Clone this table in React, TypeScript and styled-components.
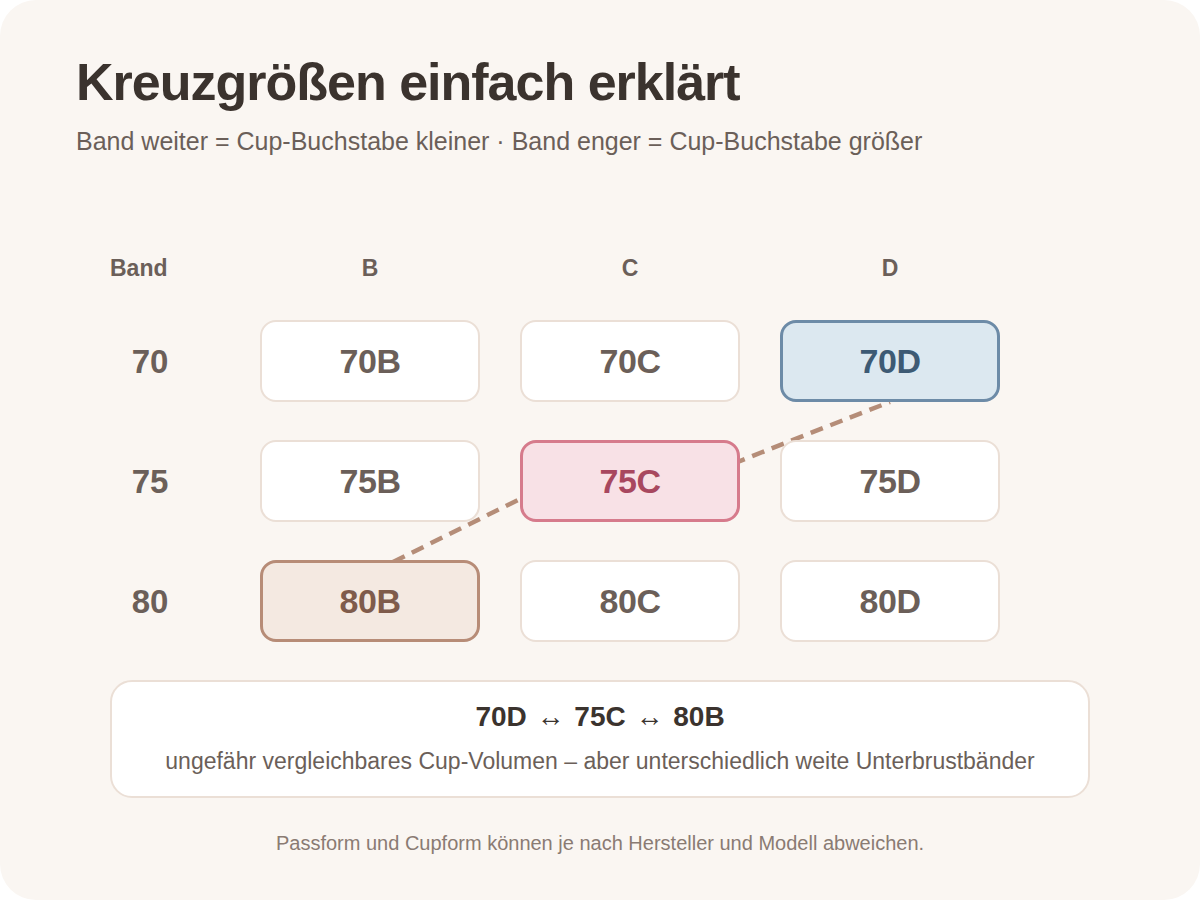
import React from "react";
import styled, { createGlobalStyle, css } from "styled-components";

const GlobalStyle = createGlobalStyle`
  html, body { margin: 0; padding: 0; background: #ffffff; }
  body { font-family: "Liberation Sans", Arial, Helvetica, sans-serif; }
  * { box-sizing: border-box; }
`;

const Card = styled.div`
  width: 1200px;
  height: 900px;
  background: #faf6f2;
  border-radius: 36px;
  padding: 56px 0 0 0;
  display: flex;
  flex-direction: column;
  overflow: hidden;
`;

const Header = styled.header`
  padding-left: 76px;
  display: flex;
  flex-direction: column;
  gap: 21px;
`;

const Title = styled.h1`
  margin: 0;
  font-size: 52px;
  line-height: 1;
  font-weight: 700;
  letter-spacing: -1px;
  color: #3b332e;
`;

const Subtitle = styled.p`
  margin: 0;
  font-size: 25px;
  line-height: 1;
  color: #6b5f59;
`;

const Grid = styled.div`
  position: relative;
  margin: 103px 0 0 110px;
  width: 890px;
  display: grid;
  grid-template-columns: 110px repeat(3, 220px);
  grid-template-rows: 25px repeat(3, 82px);
  column-gap: 40px;
  row-gap: 38px;
`;

const HeadLabel = styled.div<{ $left?: boolean }>`
  font-size: 23px;
  line-height: 1;
  font-weight: 700;
  color: #6b5f59;
  text-align: ${(p) => (p.$left ? "left" : "center")};
`;

const RowLabel = styled.div`
  align-self: center;
  padding-right: 30px;
  text-align: center;
  font-size: 33px;
  line-height: 1;
  font-weight: 700;
  color: #6b5f59;
`;

type Tone = "plain" | "blue" | "pink" | "tan";

const tones: Record<Tone, ReturnType<typeof css>> = {
  plain: css`
    background: #ffffff;
    border: 2px solid #ebdfd6;
    color: #6b5f59;
  `,
  blue: css`
    background: #dce8f0;
    border: 3px solid #6d8ba7;
    color: #3d5a74;
  `,
  pink: css`
    background: #f8e1e6;
    border: 3px solid #d67b8c;
    color: #a8475f;
  `,
  tan: css`
    background: #f4e9e1;
    border: 3px solid #b78c77;
    color: #7f5b4b;
  `,
};

const Cell = styled.div<{ $tone: Tone }>`
  position: relative;
  z-index: 1;
  display: flex;
  align-items: center;
  justify-content: center;
  border-radius: 16px;
  font-size: 34px;
  font-weight: 700;
  letter-spacing: -0.5px;
  ${(p) => tones[p.$tone]}
`;

const Connector = styled.svg`
  position: absolute;
  left: 0;
  top: 0;
  z-index: 0;
  pointer-events: none;
`;

const Summary = styled.section`
  margin: 38px 0 0 110px;
  width: 980px;
  height: 118px;
  background: #ffffff;
  border: 2px solid #ebdfd6;
  border-radius: 22px;
  padding-top: 21px;
  display: flex;
  flex-direction: column;
  align-items: center;
  gap: 19px;
`;

const SummaryTitle = styled.div`
  font-size: 28px;
  line-height: 1;
  font-weight: 700;
  color: #3b332e;
`;

const Arrow = styled.span`
  font-weight: 400;
  margin: 0 2px;
`;

const SummaryText = styled.div`
  font-size: 23px;
  line-height: 1;
  color: #6b5f59;
`;

const Footnote = styled.p`
  margin: 35px 0 0 0;
  text-align: center;
  font-size: 20px;
  line-height: 1;
  color: #8a7b73;
`;

const bands = ["70", "75", "80"];
const cups = ["B", "C", "D"];

const toneFor = (band: string, cup: string): Tone => {
  const k = band + cup;
  if (k === "70D") return "blue";
  if (k === "75C") return "pink";
  if (k === "80B") return "tan";
  return "plain";
};

export default function App() {
  return (
    <>
      <GlobalStyle />
      <Card>
        <Header>
          <Title>Kreuzgrößen einfach erklärt</Title>
          <Subtitle>
            Band weiter = Cup-Buchstabe kleiner · Band enger = Cup-Buchstabe größer
          </Subtitle>
        </Header>

        <Grid>
          <Connector width="890" height="385" viewBox="0 0 890 385">
            <path
              d="M 283 305 L 410 242 L 630 204 Q 710 172 780 145"
              fill="none"
              stroke="#b58d78"
              strokeWidth="4.5"
              strokeDasharray="13 8"
            />
          </Connector>
          <HeadLabel $left>Band</HeadLabel>
          {cups.map((c) => (
            <HeadLabel key={c}>{c}</HeadLabel>
          ))}
          {bands.map((b) => (
            <React.Fragment key={b}>
              <RowLabel>{b}</RowLabel>
              {cups.map((c) => (
                <Cell key={c} $tone={toneFor(b, c)}>
                  {b}
                  {c}
                </Cell>
              ))}
            </React.Fragment>
          ))}
        </Grid>

        <Summary>
          <SummaryTitle>
            70D <Arrow>↔</Arrow> 75C <Arrow>↔</Arrow> 80B
          </SummaryTitle>
          <SummaryText>
            ungefähr vergleichbares Cup-Volumen – aber unterschiedlich weite Unterbrustbänder
          </SummaryText>
        </Summary>

        <Footnote>Passform und Cupform können je nach Hersteller und Modell abweichen.</Footnote>
      </Card>
    </>
  );
}
